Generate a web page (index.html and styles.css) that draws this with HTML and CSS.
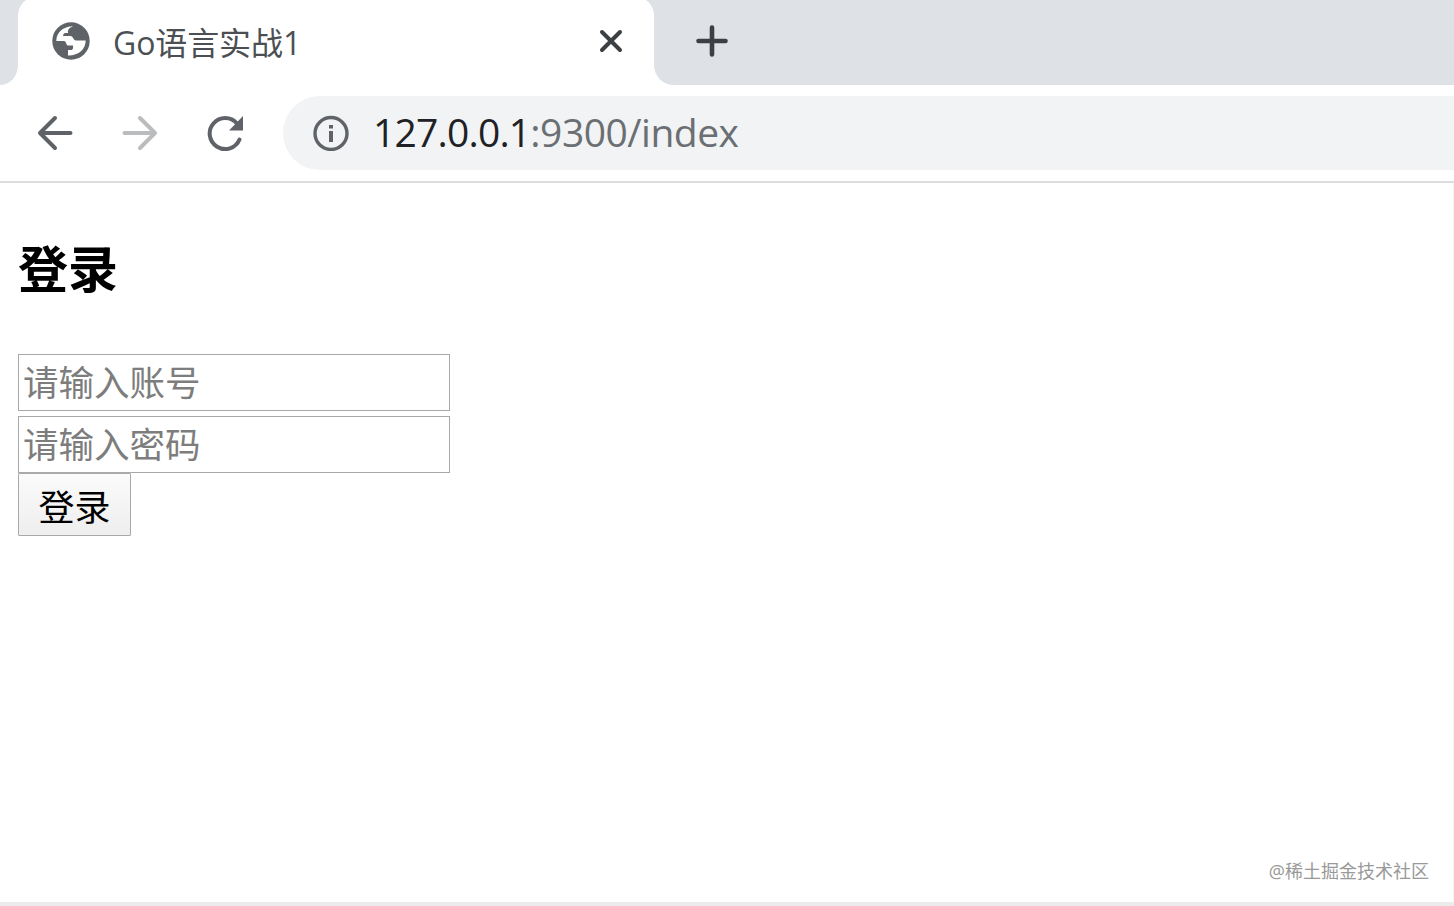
FILE: index.html
```html
<!DOCTYPE html>
<html lang="zh-CN">
<head>
  <meta charset="UTF-8" />
  <meta name="viewport" content="width=device-width, initial-scale=1.0"/>
  <title>Go语言实战1</title>
  <link rel="stylesheet" href="styles.css">
</head>
<body>
  <div class="tab-strip">
    <div class="strip-left"></div>
    <div class="tab-wrap">
      <div class="tab">
        <svg class="globe" width="38" height="38" viewBox="0 0 38 38">
          <circle cx="19" cy="19" r="18.700" fill="#5f6368"/>
          <path d="M4.300 19C4.300 11 11 4.300 21 4.300C17 6 15.500 8 16 11H13Q11 11.300 11 14H18.500C21.500 14 21 18.500 24 18.500H33.700C33.500 27 27 33.700 16 33.500V28H19.500Q21.500 27.500 21 23.500H16C14 23.500 14.500 19 12 19Z" fill="#fff"/>
        </svg>
        <span class="tab-title">Go语言实战1</span>
        <svg class="close" width="24" height="24" viewBox="0 0 24 24">
          <path d="M3 3L21 21M21 3L3 21" fill="none" stroke="#3c4043" stroke-width="4" stroke-linecap="round"/>
        </svg>
      </div>
    </div>
    <div class="strip-right">
      <svg width="32" height="32" viewBox="0 0 32 32">
        <path d="M16 2.500V29.500M2.500 16H29.500" fill="none" stroke="#3c4043" stroke-width="4.600" stroke-linecap="round"/>
      </svg>
    </div>
  </div>

  <div class="toolbar">
    <svg class="nav-icon" width="36" height="36" viewBox="0 0 36 36">
      <path d="M18 3L3 18L18 33M3 18H33.500" fill="none" stroke="#5f6368" stroke-width="4" stroke-linecap="round" stroke-linejoin="round"/>
    </svg>
    <svg class="nav-icon forward" width="36" height="36" viewBox="0 0 36 36">
      <path d="M18 3L33 18L18 33M33 18H2.500" fill="none" stroke="#babcbe" stroke-width="4" stroke-linecap="round" stroke-linejoin="round"/>
    </svg>
    <svg class="reload" width="38" height="38" viewBox="0 0 38 38">
      <path d="M31 9.500A15.500 15.500 0 1 0 33.500 25.500" fill="none" stroke="#5f6368" stroke-width="4" stroke-linecap="round"/>
      <path d="M37 2V16.500H23Z" fill="#5f6368"/>
    </svg>
    <div class="address">
      <svg width="36" height="36" viewBox="0 0 36 36">
        <circle cx="18" cy="18.500" r="16" fill="none" stroke="#5f6368" stroke-width="3.400"/>
        <path d="M16 10H20V13.500H16ZM16 16H20V27H16Z" fill="#5f6368"/>
      </svg>
      <div class="url"><span class="host">127.0.0.1</span><span class="path">:9300/index</span></div>
    </div>
  </div>

  <div class="page">
    <h3>登录</h3>
    <form>
      <input type="text" placeholder="请输入账号"/>
      <input type="password" placeholder="请输入密码"/>
      <button type="button">登录</button>
    </form>
    <div class="watermark">@稀土掘金技术社区</div>
  </div>
</body>
</html>
```
FILE: styles.css
```css
* {
  box-sizing: border-box;
}
body {
  margin: 0;
  height: 906px;
  display: flex;
  flex-direction: column;
  overflow: hidden;
  background: #fff;
  font-family: "Open Sans", "Noto Sans CJK SC", sans-serif;
}
svg {
  display: block;
  flex: none;
}
.tab-strip {
  display: flex;
  height: 85px;
  overflow: hidden;
}
.strip-left {
  width: 18px;
  background: #dee1e6;
  border-bottom-right-radius: 18px 20px;
}
.tab-wrap {
  width: 636px;
  height: 60px;
  background: #dee1e6;
}
.tab {
  display: flex;
  align-items: center;
  height: 89px;
  margin-top: -4px;
  padding: 0 31px 0 34px;
  background: #fff;
  border-radius: 20px 20px 0 0;
}
.tab-title {
  flex: 1;
  margin-left: 23px;
  padding-top: 5px;
  font-size: 32px;
  line-height: 40px;
  letter-spacing: -0.1px;
  color: #4b4f53;
}
.strip-right {
  flex: 1;
  padding: 25px 0 0 42px;
  background: #dee1e6;
  border-bottom-left-radius: 20px;
}
.toolbar {
  display: flex;
  align-items: center;
  height: 98px;
  padding-left: 37px;
  border-bottom: 2px solid #dcdddf;
}
.forward {
  margin-left: 49px;
}
.reload {
  margin-left: 48px;
}
.address {
  display: flex;
  flex: 1;
  align-items: center;
  height: 74px;
  margin-left: 39px;
  padding-left: 30px;
  background: #f1f3f4;
  border-radius: 37px 0 0 37px;
}
.url {
  margin-left: 24px;
  padding-bottom: 2px;
  font-size: 39px;
  line-height: 50px;
  letter-spacing: -0.8px;
  white-space: nowrap;
}
.host {
  color: #202124;
}
.path {
  letter-spacing: -0.5px;
  color: #6b6f73;
}
.page {
  display: flex;
  flex-direction: column;
  flex: 1;
  padding: 51px 24px 16px 18px;
  border-right: 1px solid #f4f4f4;
  border-bottom: 4px solid #ebebeb;
}
h3 {
  margin: 0 0 50px;
  font-size: 50px;
  line-height: 70px;
  font-weight: bold;
}
form {
  display: flex;
  flex-direction: column;
  align-items: flex-start;
}
input {
  width: 432px;
  height: 57px;
  margin: 0 0 5px;
  padding: 0 4px 2px;
  border: 1.5px solid #a9a9a9;
  border-radius: 0;
  background: #fff;
  font-family: inherit;
  font-size: 35.5px;
  outline: none;
}
input[type="password"] {
  margin-bottom: 0;
}
input::placeholder {
  color: #7d7d7d;
}
button {
  width: 113px;
  height: 63px;
  padding: 2px 0 0;
  border: 1px solid #a9a9a9;
  border-radius: 1px;
  background: linear-gradient(#fbfbfb, #eee);
  font-family: inherit;
  font-size: 36px;
  color: #000;
}
.watermark {
  margin-top: auto;
  align-self: flex-end;
  font-size: 18px;
  line-height: 30px;
  color: #999;
}
```
